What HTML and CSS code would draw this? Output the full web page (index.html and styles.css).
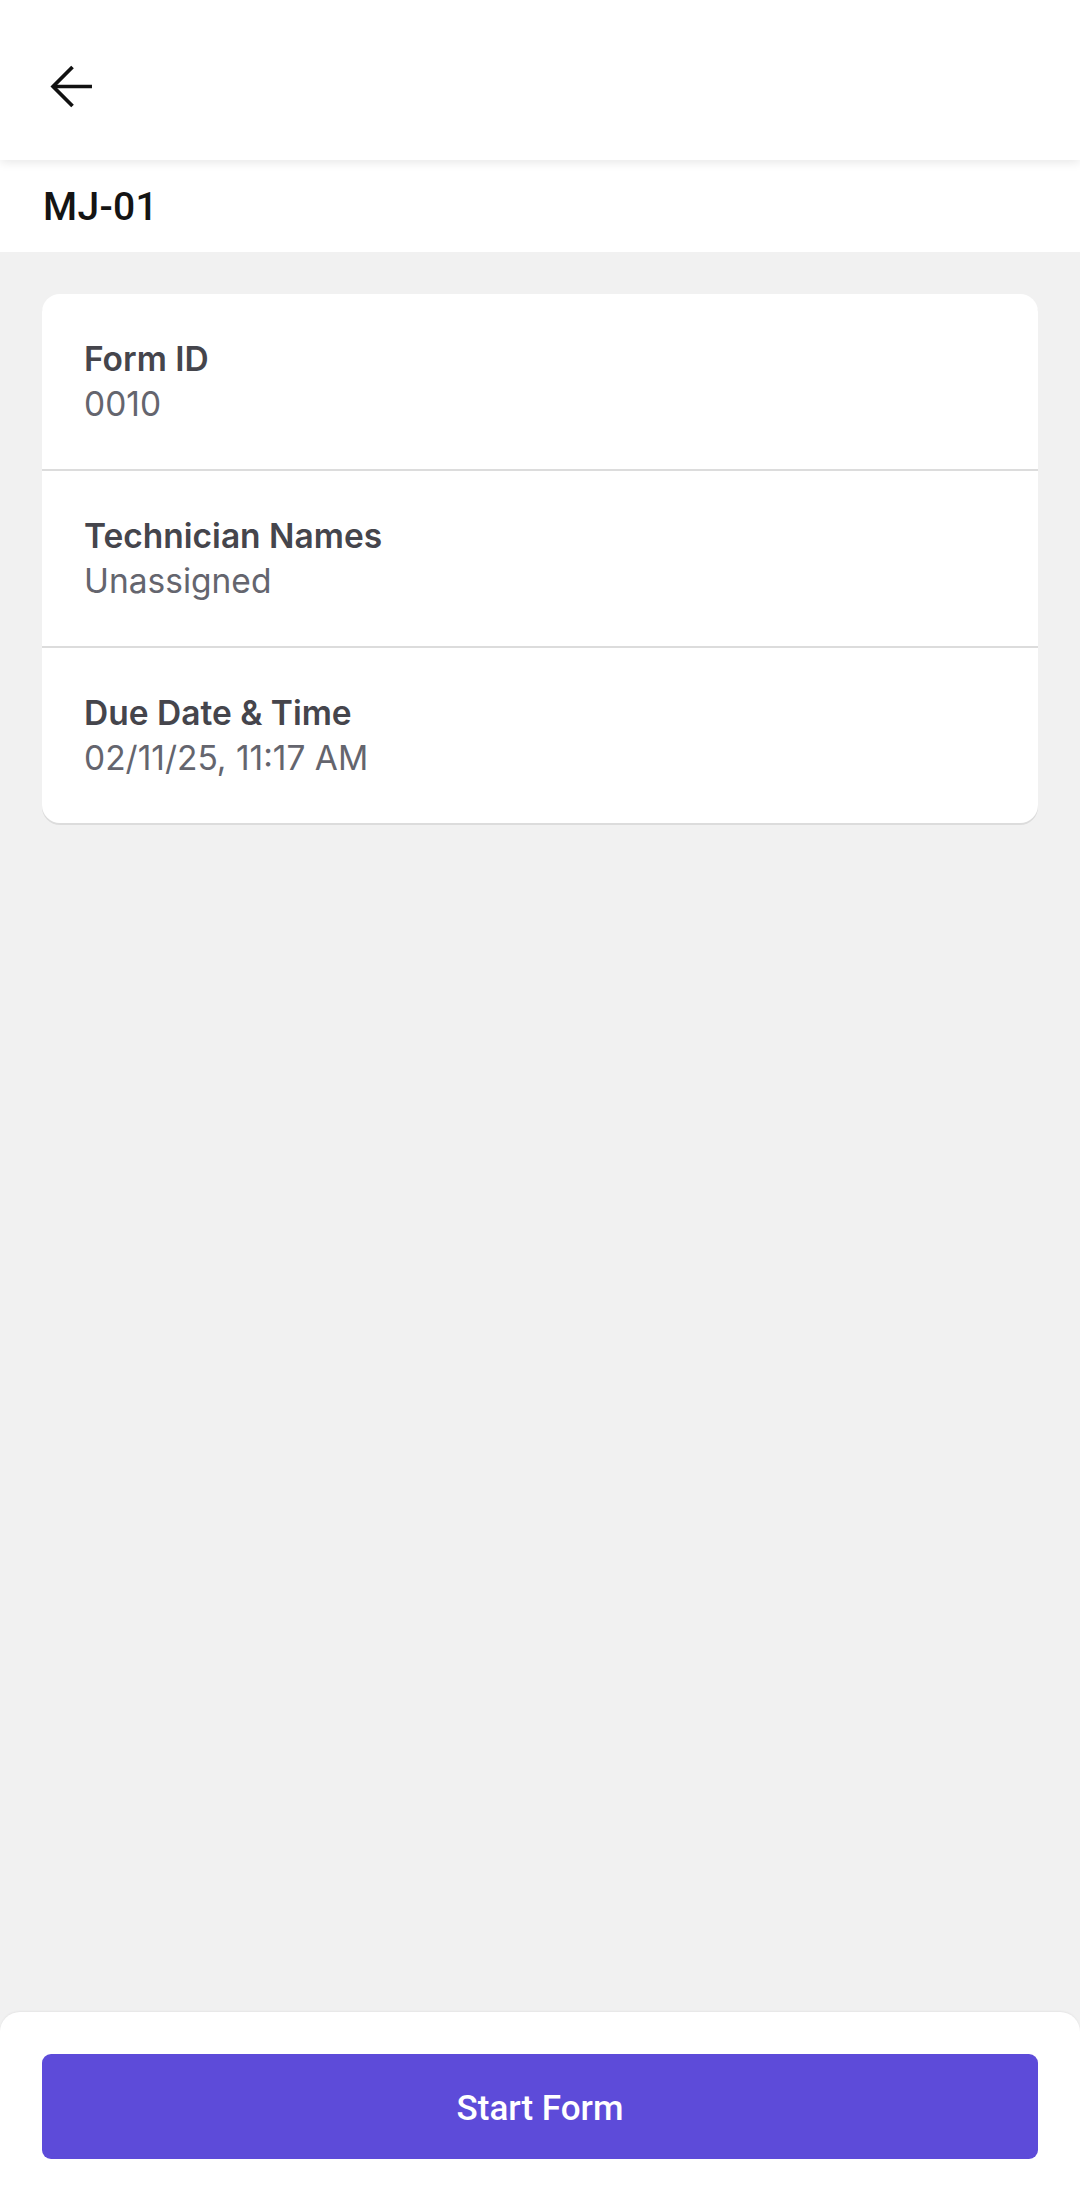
FILE: index.html
```html
<!DOCTYPE html>
<html lang="en">

<head>
    <meta charset="UTF-8">
    <meta name="viewport" content="width=device-width, initial-scale=1.0">
    <title>MJ-01</title>
    <link rel="stylesheet" href="styles.css">
</head>

<body>
    <header class="topbar">
        <button class="back" aria-label="Back">
            <svg viewBox="0 0 42 42" fill="none" stroke="currentColor" stroke-width="3.6" stroke-linecap="butt">
                <path d="M41 21H3" />
                <path d="M22 2L3 21l19 19" />
            </svg>
        </button>
    </header>

    <div class="title">MJ-01</div>

    <main class="content">
        <div class="card">
            <div class="row">
                <div class="label">Form ID</div>
                <div class="value">0010</div>
            </div>
            <div class="row">
                <div class="label">Technician Names</div>
                <div class="value">Unassigned</div>
            </div>
            <div class="row">
                <div class="label">Due Date &amp; Time</div>
                <div class="value">02/11/25, 11:17 AM</div>
            </div>
        </div>
    </main>

    <footer class="actions">
        <button class="start">Start Form</button>
    </footer>
</body>

</html>
```

FILE: styles.css
```css
* {
    box-sizing: border-box;
}

body {
    margin: 0;
    min-height: 100vh;
    display: flex;
    flex-direction: column;
    background: #f1f1f1;
    font-family: 'Inter', 'Roboto', sans-serif;
}

.topbar {
    height: 160px;
    background: #fff;
    display: flex;
    align-items: center;
    padding-left: 50px;
    box-shadow: 0 2px 10px rgba(0, 0, 0, 0.10);
    position: relative;
    z-index: 1;
}

.back {
    border: none;
    background: none;
    padding: 0;
    width: 43px;
    height: 43px;
    color: #111;
    margin-top: 12px;
}

.back svg {
    width: 43px;
    height: 43px;
    display: block;
}

.title {
    background: #fff;
    height: 92px;
    padding: 25px 43px 0;
    font-family: 'Roboto', sans-serif;
    font-weight: 500;
    font-size: 39px;
    line-height: 44px;
    letter-spacing: 0.3px;
    color: #141414;
}

.content {
    flex: 1;
    padding: 42px 42px 0;
}

.card {
    background: #fff;
    border-radius: 18px;
    box-shadow: 0 2px 0 #dcdcdc;
}

.row {
    padding: 43px 42px 42px;
    border-bottom: 2px solid #dcdcdc;
}

.row:last-child {
    border-bottom: none;
}

.label {
    font-size: 33.5px;
    line-height: 45px;
    font-weight: 600;
    color: #45454c;
}

.value {
    font-size: 33.5px;
    line-height: 45px;
    color: #64656e;
}

.actions {
    background: #fff;
    border-radius: 20px 20px 0 0;
    padding: 42px 42px 39px;
    box-shadow: 0 -1px 2px rgba(0, 0, 0, 0.05);
}

.start {
    display: block;
    width: 100%;
    height: 105px;
    border: none;
    border-radius: 9px;
    background: #5d4bd9;
    color: #fff;
    font-family: 'Roboto', sans-serif;
    font-weight: 500;
    font-size: 35px;
    padding-top: 4px;
}
```
